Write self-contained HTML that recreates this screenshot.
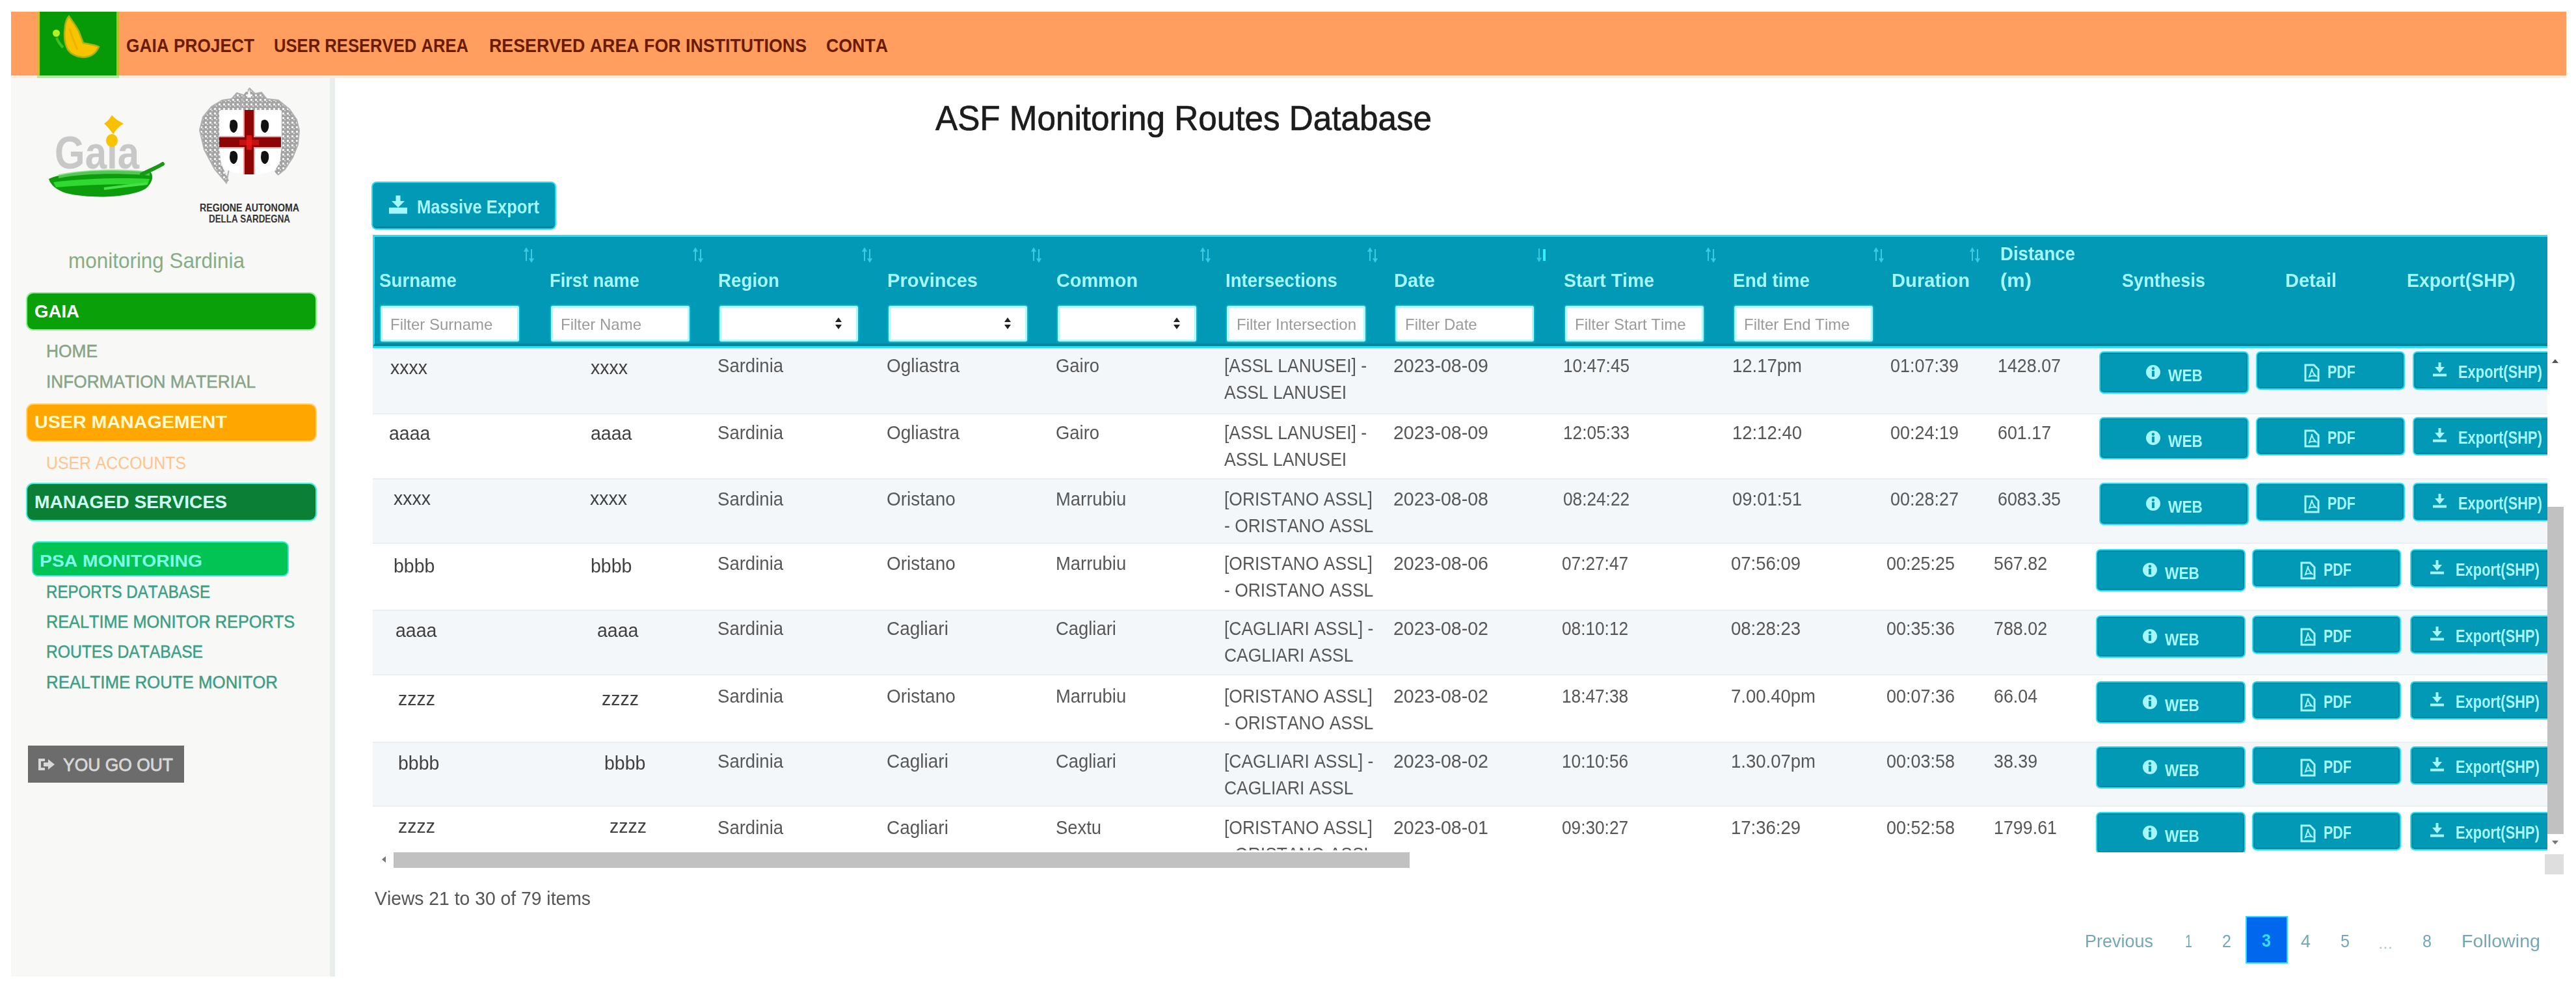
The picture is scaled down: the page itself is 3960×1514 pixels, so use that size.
<!DOCTYPE html>
<html><head><meta charset="utf-8">
<style>
html,body{margin:0;padding:0;}
body{width:3960px;height:1514px;overflow:hidden;background:#fff;position:relative;font-family:"Liberation Sans",sans-serif;font-kerning:none;}
.a{position:absolute;box-sizing:border-box;}
.t{position:absolute;white-space:nowrap;line-height:1;transform-origin:0 0;}
svg{position:absolute;overflow:visible;}
</style></head>
<body><div id="wrap" style="position:absolute;left:0;top:0;width:3960px;height:1514px;filter:blur(0.7px);">
<div class="a" style="left:17px;top:18px;width:3928px;height:98px;background:#ff9e5e;"></div>
<div class="a" style="left:57px;top:18px;width:126px;height:98px;background:#069a08;border-left:4px solid #c8c224;border-right:4px solid #b9bd22;"></div>
<svg style="left:57px;top:18px" width="126" height="98" viewBox="0 0 126 98">
<path d="M49 7 C53 13 60 22 64 30 C67 37 69 43 71 48 C80 50 90 51 95 54 C91 63 83 70 70 70 C59 69 51 64 47 58 C42 49 41 36 43 22 C44 15 46 10 49 7 Z" fill="#f8c400" stroke="#a8b414" stroke-width="2.5"/>
<path d="M50 26 C53 36 56 46 62 58" stroke="#ec9e00" stroke-width="3" fill="none" opacity="0.5"/>
<circle cx="29.5" cy="33" r="5.5" fill="#b6f020"/>
<path d="M30 40 C32 46 35 50 40 55" stroke="#40c020" stroke-width="4" fill="none"/>
</svg>
<div class="t " style="left:194.0px;top:55.2px;font-size:30px;color:#6a1c02;font-weight:bold;transform:scaleX(0.8754);">GAIA PROJECT</div>
<div class="t " style="left:421.0px;top:55.2px;font-size:30px;color:#6a1c02;font-weight:bold;transform:scaleX(0.8541);">USER RESERVED AREA</div>
<div class="t " style="left:752.0px;top:55.2px;font-size:30px;color:#6a1c02;font-weight:bold;transform:scaleX(0.8926);">RESERVED AREA FOR INSTITUTIONS</div>
<div class="t " style="left:1270.0px;top:55.2px;font-size:30px;color:#6a1c02;font-weight:bold;transform:scaleX(0.8907);">CONTA</div>
<div class="a" style="left:17px;top:116px;width:490px;height:1385px;background:#f8f8f6;"></div>
<div class="a" style="left:507px;top:116px;width:8px;height:1385px;background:#e9edec;"></div>
<div class="a" style="left:17px;top:116px;width:3928px;height:4px;background:#ffeadb;"></div>
<div class="a" style="left:57px;top:116px;width:126px;height:4px;background:#a8f0a0;"></div>
<svg style="left:60px;top:160px" width="210" height="160" viewBox="0 0 210 160">
<text x="24" y="99" font-family="Liberation Sans" font-weight="bold" font-size="70" fill="#c8c8c8" textLength="130" lengthAdjust="spacingAndGlyphs">Ga&#x131;a</text>
<path d="M112 17 C116 22 122 26 130 30 C123 34 118 40 114 46 C109 40 105 34 100 30 C106 26 109 22 112 17 Z" fill="#f7c000"/>
<ellipse cx="112" cy="56" rx="9" ry="10" fill="#f9c300"/>
<path d="M15 115 C40 103 110 99 172 105 C177 112 173 122 164 130 C140 144 80 146 42 137 C26 132 17 123 15 115 Z" fill="#0c9c0c"/>
<path d="M30 108 C70 100 130 98 170 104 L170 110 C130 106 70 106 30 114 Z" fill="#70dc70" opacity="0.7"/>
<path d="M22 120 C70 114 130 113 170 115 L167 124 C130 122 70 124 26 128 Z" fill="#30d830"/>
<path d="M100 130 C130 126 150 124 166 122" stroke="#48e048" stroke-width="4" fill="none"/>
<path d="M158 108 C170 102 180 98 190 92" stroke="#169a16" stroke-width="6" fill="none" stroke-linecap="round"/>
</svg>
<svg style="left:300px;top:130px" width="170" height="160" viewBox="0 0 170 160">
<defs><pattern id="lace" width="7" height="7" patternUnits="userSpaceOnUse"><rect width="7" height="7" fill="#a4a4a4"/><rect x="1" y="1" width="3" height="3" fill="#f2f2f2"/><rect x="4" y="4" width="2" height="2" fill="#d8d8d8"/></pattern></defs>
<path d="M83 5 L92 14 L102 12 L110 22 L128 24 L145 38 L156 54 L160 70 L158 92 L150 112 L138 130 L127 139 L122 134 L130 118 L133 96 L133 40 L37 40 L37 100 L40 122 L52 148 L48 151 L30 130 L14 100 L7 70 L12 50 L25 34 L42 24 L56 22 L64 13 L74 16 Z" fill="url(#lace)"/>
<path d="M83 5 L92 14 L102 12 L110 22 L128 24 L145 38 L156 54 L160 70 L158 92 L150 112 L138 130 L127 139 M48 151 L30 130 L14 100 L7 70 L12 50 L25 34 L42 24 L56 22 L64 13 L74 16 Z" fill="none" stroke="#b0b0b0" stroke-width="2"/>
<path d="M83 6 L86 20 L80 20 Z" fill="#ffffff"/>
<path d="M39 39 L131 39 L131 112 C131 128 118 138 85 138 C52 138 39 128 39 112 Z" fill="#ffffff"/>
<rect x="74" y="39" width="18" height="99" fill="#f4a0a0"/>
<rect x="37" y="79" width="95" height="19" fill="#f4a0a0"/>
<rect x="76" y="39" width="14" height="99" fill="#8c0606"/>
<rect x="37" y="81" width="95" height="15" fill="#8c0606"/>
<rect x="79" y="78" width="8" height="22" fill="#f01818" opacity="0.8"/>
<rect x="68" y="85" width="30" height="8" fill="#f01818" opacity="0.6"/>
<g fill="#111">
<path d="M54 56 C58 52 64 54 65 60 C66 66 64 72 60 74 C55 74 53 68 53 63 Z"/>
<path d="M102 56 C106 52 112 54 113 60 C114 66 112 72 108 74 C103 74 101 68 101 63 Z"/>
<path d="M54 104 C58 100 64 102 65 108 C66 114 64 120 60 122 C55 122 53 116 53 111 Z"/>
<path d="M102 104 C106 100 112 102 113 108 C114 114 112 120 108 122 C103 122 101 116 101 111 Z"/>
</g>
</svg>
<div class="t " style="left:307.0px;top:311.5px;font-size:16px;color:#303030;font-weight:bold;transform:scaleX(0.8872);transform-origin:0 0;">REGIONE AUTONOMA</div>
<div class="t " style="left:321.0px;top:328.3px;font-size:17px;color:#353535;font-weight:bold;transform:scaleX(0.7878);">DELLA SARDEGNA</div>
<div class="t " style="left:105.0px;top:382.6px;font-size:34px;color:#86ad86;transform:scaleX(0.9251);">monitoring Sardinia</div>
<div class="a" style="left:42px;top:451px;width:443px;height:55px;background:#0aa00a;border-radius:9px;box-shadow:0 0 0 2px #8cf08c;"></div>
<div class="t " style="left:53.0px;top:464.6px;font-size:28px;color:#ffffff;font-weight:bold;transform:scaleX(0.9857);">GAIA</div>
<div class="t " style="left:71.0px;top:525.6px;font-size:28px;color:#86a486;transform:scaleX(0.9405);-webkit-text-stroke:0.5px #86a486;">HOME</div>
<div class="t " style="left:71.0px;top:572.6px;font-size:28px;color:#86a486;transform:scaleX(0.9366);-webkit-text-stroke:0.5px #86a486;">INFORMATION MATERIAL</div>
<div class="a" style="left:42px;top:622px;width:443px;height:55px;background:#ffa600;border-radius:9px;box-shadow:0 0 0 2px #ffd27a;"></div>
<div class="t " style="left:53.0px;top:635.7px;font-size:27px;color:#fffad0;font-weight:bold;transform:scaleX(1.0609);">USER MANAGEMENT</div>
<div class="t " style="left:71.0px;top:698.7px;font-size:27px;color:#ffc48e;transform:scaleX(0.9187);">USER ACCOUNTS</div>
<div class="a" style="left:42px;top:744px;width:443px;height:55px;background:#0b7f36;border-radius:9px;box-shadow:0 0 0 2px #40f0e0;"></div>
<div class="t " style="left:53.0px;top:757.6px;font-size:28px;color:#d0fff4;font-weight:bold;transform:scaleX(1.0067);">MANAGED SERVICES</div>
<div class="a" style="left:51px;top:834px;width:391px;height:50px;background:#02c455;border-radius:7px;box-shadow:0 0 0 2px #30f0d0;"></div>
<div class="t " style="left:61.0px;top:850.0px;font-size:25px;color:#80fae8;font-weight:bold;transform:scaleX(1.1321);">PSA MONITORING</div>
<div class="t " style="left:71.0px;top:896.7px;font-size:27px;color:#3a9f86;transform:scaleX(0.8934);-webkit-text-stroke:0.5px #3a9f86;">REPORTS DATABASE</div>
<div class="t " style="left:71.0px;top:942.7px;font-size:27px;color:#3a9f86;transform:scaleX(0.9362);-webkit-text-stroke:0.5px #3a9f86;">REALTIME MONITOR REPORTS</div>
<div class="t " style="left:71.0px;top:988.7px;font-size:27px;color:#3a9f86;transform:scaleX(0.9127);-webkit-text-stroke:0.5px #3a9f86;">ROUTES DATABASE</div>
<div class="t " style="left:71.0px;top:1035.7px;font-size:27px;color:#3a9f86;transform:scaleX(0.9570);-webkit-text-stroke:0.5px #3a9f86;">REALTIME ROUTE MONITOR</div>
<div class="a" style="left:43px;top:1146px;width:240px;height:57px;background:#6c6c6c;"></div>
<svg style="left:57px;top:1163px" width="30" height="24" viewBox="0 0 30 24">
<path d="M2 3 L12 3 L12 7 L6 7 L6 17 L12 17 L12 21 L2 21 Z" fill="#d8d8d8"/>
<path d="M10 9 L17 9 L17 4 L27 12 L17 20 L17 15 L10 15 Z" fill="#d8d8d8"/>
</svg>
<div class="t " style="left:97.0px;top:1162.7px;font-size:27px;color:#d8d8d8;transform:scaleX(0.9797);-webkit-text-stroke:0.8px #d8d8d8;">YOU GO OUT</div>
<div class="t " style="left:1438.0px;top:154.6px;font-size:53px;color:#1c1c1c;transform:scaleX(0.9664);-webkit-text-stroke:0.7px #1c1c1c;">ASF Monitoring Routes Database</div>
<div class="a" style="left:573px;top:281px;width:280px;height:70px;background:#0299b6;border-radius:6px;box-shadow:0 0 0 2px #22e2f4;border-bottom:3px solid #0a839c;"></div>
<svg style="left:597px;top:300px" width="30" height="30" viewBox="0 0 30 30"><path d="M11.5 0.5 L18.5 0.5 L18.5 9 L25 9 L15 19 L5 9 L11.5 9 Z" fill="#a6f6ff"/><rect x="1" y="19" width="28" height="9.5" fill="#a6f6ff"/></svg>
<div class="t " style="left:641.0px;top:303.2px;font-size:30px;color:#a6f6ff;font-weight:bold;transform:scaleX(0.8542);">Massive Export</div>
<div class="a" style="left:573px;top:361px;width:3343px;height:172px;background:#0299b6;border-top:3px solid #22e2f4;border-left:3px solid #22e2f4;border-bottom:5px solid #08849c;"></div>
<div class="a" style="left:573px;top:532px;width:3343px;height:3px;background:#22e2f4;"></div>
<div class="t " style="left:583.0px;top:416.2px;font-size:30px;color:#a6f6ff;font-weight:bold;transform:scaleX(0.9269);">Surname</div>
<div class="t " style="left:845.0px;top:416.2px;font-size:30px;color:#a6f6ff;font-weight:bold;transform:scaleX(0.9096);">First name</div>
<div class="t " style="left:1104.0px;top:416.2px;font-size:30px;color:#a6f6ff;font-weight:bold;transform:scaleX(0.9246);">Region</div>
<div class="t " style="left:1364.0px;top:416.2px;font-size:30px;color:#a6f6ff;font-weight:bold;transform:scaleX(0.9693);">Provinces</div>
<div class="t " style="left:1624.0px;top:416.2px;font-size:30px;color:#a6f6ff;font-weight:bold;transform:scaleX(0.9616);">Common</div>
<div class="t " style="left:1884.0px;top:416.2px;font-size:30px;color:#a6f6ff;font-weight:bold;transform:scaleX(0.9211);">Intersections</div>
<div class="t " style="left:2143.0px;top:416.2px;font-size:30px;color:#a6f6ff;font-weight:bold;transform:scaleX(0.9689);">Date</div>
<div class="t " style="left:2404.0px;top:416.2px;font-size:30px;color:#a6f6ff;font-weight:bold;transform:scaleX(0.9475);">Start Time</div>
<div class="t " style="left:2664.0px;top:416.2px;font-size:30px;color:#a6f6ff;font-weight:bold;transform:scaleX(0.9315);">End time</div>
<div class="t " style="left:2908.0px;top:416.2px;font-size:30px;color:#a6f6ff;font-weight:bold;transform:scaleX(0.9730);">Duration</div>
<div class="t " style="left:3075.0px;top:375.2px;font-size:30px;color:#a6f6ff;font-weight:bold;transform:scaleX(0.9196);">Distance</div>
<div class="t " style="left:3075.0px;top:416.2px;font-size:30px;color:#a6f6ff;font-weight:bold;transform:scaleX(1.0288);">(m)</div>
<div class="t " style="left:3262.0px;top:416.2px;font-size:30px;color:#a6f6ff;font-weight:bold;transform:scaleX(0.9032);">Synthesis</div>
<div class="t " style="left:3513.0px;top:416.2px;font-size:30px;color:#a6f6ff;font-weight:bold;transform:scaleX(0.9670);">Detail</div>
<div class="t " style="left:3700.0px;top:416.2px;font-size:30px;color:#a6f6ff;font-weight:bold;transform:scaleX(0.9452);">Export(SHP)</div>
<svg style="left:804px;top:380px" width="20" height="24" viewBox="0 0 20 24"><path d="M5 21 L5 3 M2 7 L5 2 L8 7 M13 3 L13 21 M10 17 L13 22 L16 17" stroke="#3ccbe0" stroke-width="2" fill="none"/></svg>
<svg style="left:1064px;top:380px" width="20" height="24" viewBox="0 0 20 24"><path d="M5 21 L5 3 M2 7 L5 2 L8 7 M13 3 L13 21 M10 17 L13 22 L16 17" stroke="#3ccbe0" stroke-width="2" fill="none"/></svg>
<svg style="left:1324px;top:380px" width="20" height="24" viewBox="0 0 20 24"><path d="M5 21 L5 3 M2 7 L5 2 L8 7 M13 3 L13 21 M10 17 L13 22 L16 17" stroke="#3ccbe0" stroke-width="2" fill="none"/></svg>
<svg style="left:1584px;top:380px" width="20" height="24" viewBox="0 0 20 24"><path d="M5 21 L5 3 M2 7 L5 2 L8 7 M13 3 L13 21 M10 17 L13 22 L16 17" stroke="#3ccbe0" stroke-width="2" fill="none"/></svg>
<svg style="left:1844px;top:380px" width="20" height="24" viewBox="0 0 20 24"><path d="M5 21 L5 3 M2 7 L5 2 L8 7 M13 3 L13 21 M10 17 L13 22 L16 17" stroke="#3ccbe0" stroke-width="2" fill="none"/></svg>
<svg style="left:2101px;top:380px" width="20" height="24" viewBox="0 0 20 24"><path d="M5 21 L5 3 M2 7 L5 2 L8 7 M13 3 L13 21 M10 17 L13 22 L16 17" stroke="#3ccbe0" stroke-width="2" fill="none"/></svg>
<svg style="left:2361px;top:380px" width="20" height="24" viewBox="0 0 20 24"><path d="M5 2 L5 20 M2 16 L5 21 L8 16" stroke="#3ac8dc" stroke-width="2" fill="none"/><path d="M13 3 L13 21" stroke="#30f0ff" stroke-width="4" fill="none"/></svg>
<svg style="left:2621px;top:380px" width="20" height="24" viewBox="0 0 20 24"><path d="M5 21 L5 3 M2 7 L5 2 L8 7 M13 3 L13 21 M10 17 L13 22 L16 17" stroke="#3ccbe0" stroke-width="2" fill="none"/></svg>
<svg style="left:2879px;top:380px" width="20" height="24" viewBox="0 0 20 24"><path d="M5 21 L5 3 M2 7 L5 2 L8 7 M13 3 L13 21 M10 17 L13 22 L16 17" stroke="#3ccbe0" stroke-width="2" fill="none"/></svg>
<svg style="left:3027px;top:380px" width="20" height="24" viewBox="0 0 20 24"><path d="M5 21 L5 3 M2 7 L5 2 L8 7 M13 3 L13 21 M10 17 L13 22 L16 17" stroke="#3ccbe0" stroke-width="2" fill="none"/></svg>
<div class="a" style="left:585px;top:470px;width:213px;height:55px;background:#fff;border:3px solid #a8fbff;box-shadow:0 0 0 2px #06b0c8;border-radius:3px;"></div>
<div class="a" style="left:588px;top:473px;width:207px;height:49px;overflow:hidden;">
<div class="t " style="left:12.0px;top:14.2px;font-size:24px;color:#9a9a9a;transform:scaleX(1.0000);">Filter Surname</div>
</div>
<div class="a" style="left:847px;top:470px;width:213px;height:55px;background:#fff;border:3px solid #a8fbff;box-shadow:0 0 0 2px #06b0c8;border-radius:3px;"></div>
<div class="a" style="left:850px;top:473px;width:207px;height:49px;overflow:hidden;">
<div class="t " style="left:12.0px;top:14.2px;font-size:24px;color:#9a9a9a;transform:scaleX(1.0000);">Filter Name</div>
</div>
<div class="a" style="left:1106px;top:470px;width:213px;height:55px;background:#fff;border:3px solid #a8fbff;box-shadow:0 0 0 2px #06b0c8;border-radius:3px;"></div>
<svg style="left:1282px;top:486px" width="14" height="22" viewBox="0 0 14 22"><path d="M7 2 L12 9 L2 9 Z M7 20 L12 13 L2 13 Z" fill="#222"/></svg>
<div class="a" style="left:1366px;top:470px;width:213px;height:55px;background:#fff;border:3px solid #a8fbff;box-shadow:0 0 0 2px #06b0c8;border-radius:3px;"></div>
<svg style="left:1542px;top:486px" width="14" height="22" viewBox="0 0 14 22"><path d="M7 2 L12 9 L2 9 Z M7 20 L12 13 L2 13 Z" fill="#222"/></svg>
<div class="a" style="left:1626px;top:470px;width:213px;height:55px;background:#fff;border:3px solid #a8fbff;box-shadow:0 0 0 2px #06b0c8;border-radius:3px;"></div>
<svg style="left:1802px;top:486px" width="14" height="22" viewBox="0 0 14 22"><path d="M7 2 L12 9 L2 9 Z M7 20 L12 13 L2 13 Z" fill="#222"/></svg>
<div class="a" style="left:1886px;top:470px;width:213px;height:55px;background:#fff;border:3px solid #a8fbff;box-shadow:0 0 0 2px #06b0c8;border-radius:3px;"></div>
<div class="a" style="left:1889px;top:473px;width:207px;height:49px;overflow:hidden;">
<div class="t " style="left:12.0px;top:14.2px;font-size:24px;color:#9a9a9a;transform:scaleX(1.0000);">Filter Intersection</div>
</div>
<div class="a" style="left:2145px;top:470px;width:213px;height:55px;background:#fff;border:3px solid #a8fbff;box-shadow:0 0 0 2px #06b0c8;border-radius:3px;"></div>
<div class="a" style="left:2148px;top:473px;width:207px;height:49px;overflow:hidden;">
<div class="t " style="left:12.0px;top:14.2px;font-size:24px;color:#9a9a9a;transform:scaleX(1.0000);">Filter Date</div>
</div>
<div class="a" style="left:2406px;top:470px;width:213px;height:55px;background:#fff;border:3px solid #a8fbff;box-shadow:0 0 0 2px #06b0c8;border-radius:3px;"></div>
<div class="a" style="left:2409px;top:473px;width:207px;height:49px;overflow:hidden;">
<div class="t " style="left:12.0px;top:14.2px;font-size:24px;color:#9a9a9a;transform:scaleX(1.0000);">Filter Start Time</div>
</div>
<div class="a" style="left:2666px;top:470px;width:213px;height:55px;background:#fff;border:3px solid #a8fbff;box-shadow:0 0 0 2px #06b0c8;border-radius:3px;"></div>
<div class="a" style="left:2669px;top:473px;width:207px;height:49px;overflow:hidden;">
<div class="t " style="left:12.0px;top:14.2px;font-size:24px;color:#9a9a9a;transform:scaleX(1.0000);">Filter End Time</div>
</div>
<div class="a" style="left:573px;top:535px;width:3343px;height:775px;overflow:hidden;">
<div class="a" style="left:0px;top:0px;width:3343px;height:101px;background:#f3f7fa;"></div>
<div class="t" style="left:27.0px;top:14.6px;font-size:30px;color:#404040;transform:scaleX(0.9500);">xxxx</div>
<div class="t" style="left:335.0px;top:14.6px;font-size:30px;color:#404040;transform:scaleX(0.9500);">xxxx</div>
<div class="t" style="left:530.0px;top:13.4px;font-size:29px;color:#575757;transform:scaleX(0.9500);">Sardinia</div>
<div class="t" style="left:790.0px;top:13.4px;font-size:29px;color:#575757;transform:scaleX(0.9650);">Ogliastra</div>
<div class="t" style="left:1050.0px;top:13.4px;font-size:29px;color:#575757;transform:scaleX(0.9450);">Gairo</div>
<div class="t" style="left:1309.0px;top:13.4px;font-size:29px;color:#575757;transform:scaleX(0.9120);">[ASSL LANUSEI] -</div>
<div class="t" style="left:1309.0px;top:54.4px;font-size:29px;color:#575757;transform:scaleX(0.9120);">ASSL LANUSEI</div>
<div class="t" style="left:1569.0px;top:13.4px;font-size:29px;color:#575757;transform:scaleX(0.9840);">2023-08-09</div>
<div class="t" style="left:1830.0px;top:13.4px;font-size:29px;color:#575757;transform:scaleX(0.9040);">10:47:45</div>
<div class="t" style="left:2090.0px;top:13.4px;font-size:29px;color:#575757;transform:scaleX(0.9480);">12.17pm</div>
<div class="t" style="left:2333.0px;top:13.4px;font-size:29px;color:#575757;transform:scaleX(0.9300);">01:07:39</div>
<div class="t" style="left:2498.0px;top:13.4px;font-size:29px;color:#575757;transform:scaleX(0.9250);">1428.07</div>
<div class="a" style="left:2656px;top:7px;width:226px;height:61px;background:#0299b6;border-radius:5px;border:2px solid #0a88a2;box-shadow:0 0 0 2px #22e2f4;"></div>
<div class="a" style="left:2897px;top:7px;width:225px;height:55px;background:#0299b6;border-radius:5px;border:2px solid #0a88a2;box-shadow:0 0 0 2px #22e2f4;"></div>
<div class="a" style="left:3138px;top:7px;width:225px;height:55px;background:#0299b6;border-radius:5px;border:2px solid #0a88a2;box-shadow:0 0 0 2px #22e2f4;"></div>
<svg style="left:2725px;top:25px" width="24" height="24" viewBox="0 0 24 24"><circle cx="12" cy="12" r="11" fill="#a6f6ff"/><rect x="10" y="10" width="4" height="9" fill="#0299b6"/><circle cx="12" cy="6.5" r="2.2" fill="#0299b6"/></svg>
<div class="t" style="left:2760.0px;top:28.5px;font-size:26px;color:#a6f6ff;font-weight:bold;transform:scaleX(0.8737);">WEB</div>
<svg style="left:2968px;top:24px" width="26" height="28" viewBox="0 0 26 28"><path d="M3 2 L16 2 L23 9 L23 26 L3 26 Z" fill="none" stroke="#a6f6ff" stroke-width="3"/><path d="M9 20 C11 14 13 10 13 7 C13 11 16 16 19 19 C15 18 11 19 9 20 Z" fill="none" stroke="#a6f6ff" stroke-width="2"/></svg>
<div class="t" style="left:3005.0px;top:22.8px;font-size:28px;color:#a6f6ff;font-weight:bold;transform:scaleX(0.7679);">PDF</div>
<svg style="left:3167px;top:22px" width="22" height="22" viewBox="0 0 22 22"><path d="M8.5 0 L12.5 0 L12.5 7 L18 7 L10.5 16 L3 7 L8.5 7 Z" fill="#a6f6ff"/><rect x="0" y="17.5" width="21" height="4" fill="#a6f6ff"/></svg>
<div class="t" style="left:3206.0px;top:23.3px;font-size:28px;color:#a6f6ff;font-weight:bold;transform:scaleX(0.7823);">Export(SHP)</div>
<div class="a" style="left:0px;top:100px;width:3343px;height:2px;background:#eceff2;"></div>
<div class="t" style="left:25.0px;top:115.6px;font-size:30px;color:#404040;transform:scaleX(0.9500);">aaaa</div>
<div class="t" style="left:335.0px;top:115.6px;font-size:30px;color:#404040;transform:scaleX(0.9500);">aaaa</div>
<div class="t" style="left:530.0px;top:116.4px;font-size:29px;color:#575757;transform:scaleX(0.9500);">Sardinia</div>
<div class="t" style="left:790.0px;top:116.4px;font-size:29px;color:#575757;transform:scaleX(0.9650);">Ogliastra</div>
<div class="t" style="left:1050.0px;top:116.4px;font-size:29px;color:#575757;transform:scaleX(0.9450);">Gairo</div>
<div class="t" style="left:1309.0px;top:116.4px;font-size:29px;color:#575757;transform:scaleX(0.9120);">[ASSL LANUSEI] -</div>
<div class="t" style="left:1309.0px;top:157.4px;font-size:29px;color:#575757;transform:scaleX(0.9120);">ASSL LANUSEI</div>
<div class="t" style="left:1569.0px;top:116.4px;font-size:29px;color:#575757;transform:scaleX(0.9840);">2023-08-09</div>
<div class="t" style="left:1830.0px;top:116.4px;font-size:29px;color:#575757;transform:scaleX(0.9040);">12:05:33</div>
<div class="t" style="left:2090.0px;top:116.4px;font-size:29px;color:#575757;transform:scaleX(0.9480);">12:12:40</div>
<div class="t" style="left:2333.0px;top:116.4px;font-size:29px;color:#575757;transform:scaleX(0.9300);">00:24:19</div>
<div class="t" style="left:2498.0px;top:116.4px;font-size:29px;color:#575757;transform:scaleX(0.9250);">601.17</div>
<div class="a" style="left:2656px;top:108px;width:226px;height:61px;background:#0299b6;border-radius:5px;border:2px solid #0a88a2;box-shadow:0 0 0 2px #22e2f4;"></div>
<div class="a" style="left:2897px;top:108px;width:225px;height:55px;background:#0299b6;border-radius:5px;border:2px solid #0a88a2;box-shadow:0 0 0 2px #22e2f4;"></div>
<div class="a" style="left:3138px;top:108px;width:225px;height:55px;background:#0299b6;border-radius:5px;border:2px solid #0a88a2;box-shadow:0 0 0 2px #22e2f4;"></div>
<svg style="left:2725px;top:126px" width="24" height="24" viewBox="0 0 24 24"><circle cx="12" cy="12" r="11" fill="#a6f6ff"/><rect x="10" y="10" width="4" height="9" fill="#0299b6"/><circle cx="12" cy="6.5" r="2.2" fill="#0299b6"/></svg>
<div class="t" style="left:2760.0px;top:129.5px;font-size:26px;color:#a6f6ff;font-weight:bold;transform:scaleX(0.8737);">WEB</div>
<svg style="left:2968px;top:125px" width="26" height="28" viewBox="0 0 26 28"><path d="M3 2 L16 2 L23 9 L23 26 L3 26 Z" fill="none" stroke="#a6f6ff" stroke-width="3"/><path d="M9 20 C11 14 13 10 13 7 C13 11 16 16 19 19 C15 18 11 19 9 20 Z" fill="none" stroke="#a6f6ff" stroke-width="2"/></svg>
<div class="t" style="left:3005.0px;top:123.8px;font-size:28px;color:#a6f6ff;font-weight:bold;transform:scaleX(0.7679);">PDF</div>
<svg style="left:3167px;top:123px" width="22" height="22" viewBox="0 0 22 22"><path d="M8.5 0 L12.5 0 L12.5 7 L18 7 L10.5 16 L3 7 L8.5 7 Z" fill="#a6f6ff"/><rect x="0" y="17.5" width="21" height="4" fill="#a6f6ff"/></svg>
<div class="t" style="left:3206.0px;top:124.3px;font-size:28px;color:#a6f6ff;font-weight:bold;transform:scaleX(0.7823);">Export(SHP)</div>
<div class="a" style="left:0px;top:201px;width:3343px;height:99px;background:#f3f7fa;"></div>
<div class="a" style="left:0px;top:200px;width:3343px;height:2px;background:#eceff2;"></div>
<div class="t" style="left:32.0px;top:215.6px;font-size:30px;color:#404040;transform:scaleX(0.9500);">xxxx</div>
<div class="t" style="left:334.0px;top:215.6px;font-size:30px;color:#404040;transform:scaleX(0.9500);">xxxx</div>
<div class="t" style="left:530.0px;top:218.4px;font-size:29px;color:#575757;transform:scaleX(0.9500);">Sardinia</div>
<div class="t" style="left:790.0px;top:218.4px;font-size:29px;color:#575757;transform:scaleX(0.9650);">Oristano</div>
<div class="t" style="left:1050.0px;top:218.4px;font-size:29px;color:#575757;transform:scaleX(0.9450);">Marrubiu</div>
<div class="t" style="left:1309.0px;top:218.4px;font-size:29px;color:#575757;transform:scaleX(0.9120);">[ORISTANO ASSL]</div>
<div class="t" style="left:1309.0px;top:259.4px;font-size:29px;color:#575757;transform:scaleX(0.9120);">- ORISTANO ASSL</div>
<div class="t" style="left:1569.0px;top:218.4px;font-size:29px;color:#575757;transform:scaleX(0.9840);">2023-08-08</div>
<div class="t" style="left:1830.0px;top:218.4px;font-size:29px;color:#575757;transform:scaleX(0.9040);">08:24:22</div>
<div class="t" style="left:2090.0px;top:218.4px;font-size:29px;color:#575757;transform:scaleX(0.9480);">09:01:51</div>
<div class="t" style="left:2333.0px;top:218.4px;font-size:29px;color:#575757;transform:scaleX(0.9300);">00:28:27</div>
<div class="t" style="left:2498.0px;top:218.4px;font-size:29px;color:#575757;transform:scaleX(0.9250);">6083.35</div>
<div class="a" style="left:2656px;top:209px;width:226px;height:61px;background:#0299b6;border-radius:5px;border:2px solid #0a88a2;box-shadow:0 0 0 2px #22e2f4;"></div>
<div class="a" style="left:2897px;top:209px;width:225px;height:55px;background:#0299b6;border-radius:5px;border:2px solid #0a88a2;box-shadow:0 0 0 2px #22e2f4;"></div>
<div class="a" style="left:3138px;top:209px;width:225px;height:55px;background:#0299b6;border-radius:5px;border:2px solid #0a88a2;box-shadow:0 0 0 2px #22e2f4;"></div>
<svg style="left:2725px;top:227px" width="24" height="24" viewBox="0 0 24 24"><circle cx="12" cy="12" r="11" fill="#a6f6ff"/><rect x="10" y="10" width="4" height="9" fill="#0299b6"/><circle cx="12" cy="6.5" r="2.2" fill="#0299b6"/></svg>
<div class="t" style="left:2760.0px;top:230.5px;font-size:26px;color:#a6f6ff;font-weight:bold;transform:scaleX(0.8737);">WEB</div>
<svg style="left:2968px;top:226px" width="26" height="28" viewBox="0 0 26 28"><path d="M3 2 L16 2 L23 9 L23 26 L3 26 Z" fill="none" stroke="#a6f6ff" stroke-width="3"/><path d="M9 20 C11 14 13 10 13 7 C13 11 16 16 19 19 C15 18 11 19 9 20 Z" fill="none" stroke="#a6f6ff" stroke-width="2"/></svg>
<div class="t" style="left:3005.0px;top:224.8px;font-size:28px;color:#a6f6ff;font-weight:bold;transform:scaleX(0.7679);">PDF</div>
<svg style="left:3167px;top:224px" width="22" height="22" viewBox="0 0 22 22"><path d="M8.5 0 L12.5 0 L12.5 7 L18 7 L10.5 16 L3 7 L8.5 7 Z" fill="#a6f6ff"/><rect x="0" y="17.5" width="21" height="4" fill="#a6f6ff"/></svg>
<div class="t" style="left:3206.0px;top:225.3px;font-size:28px;color:#a6f6ff;font-weight:bold;transform:scaleX(0.7823);">Export(SHP)</div>
<div class="a" style="left:0px;top:299px;width:3343px;height:2px;background:#eceff2;"></div>
<div class="t" style="left:32.0px;top:319.6px;font-size:30px;color:#404040;transform:scaleX(0.9500);">bbbb</div>
<div class="t" style="left:335.0px;top:319.6px;font-size:30px;color:#404040;transform:scaleX(0.9500);">bbbb</div>
<div class="t" style="left:530.0px;top:317.4px;font-size:29px;color:#575757;transform:scaleX(0.9500);">Sardinia</div>
<div class="t" style="left:790.0px;top:317.4px;font-size:29px;color:#575757;transform:scaleX(0.9650);">Oristano</div>
<div class="t" style="left:1050.0px;top:317.4px;font-size:29px;color:#575757;transform:scaleX(0.9450);">Marrubiu</div>
<div class="t" style="left:1309.0px;top:317.4px;font-size:29px;color:#575757;transform:scaleX(0.9120);">[ORISTANO ASSL]</div>
<div class="t" style="left:1309.0px;top:358.4px;font-size:29px;color:#575757;transform:scaleX(0.9120);">- ORISTANO ASSL</div>
<div class="t" style="left:1569.0px;top:317.4px;font-size:29px;color:#575757;transform:scaleX(0.9840);">2023-08-06</div>
<div class="t" style="left:1828.0px;top:317.4px;font-size:29px;color:#575757;transform:scaleX(0.9040);">07:27:47</div>
<div class="t" style="left:2088.0px;top:317.4px;font-size:29px;color:#575757;transform:scaleX(0.9480);">07:56:09</div>
<div class="t" style="left:2327.0px;top:317.4px;font-size:29px;color:#575757;transform:scaleX(0.9300);">00:25:25</div>
<div class="t" style="left:2492.0px;top:317.4px;font-size:29px;color:#575757;transform:scaleX(0.9250);">567.82</div>
<div class="a" style="left:2651px;top:311px;width:226px;height:61px;background:#0299b6;border-radius:5px;border:2px solid #0a88a2;box-shadow:0 0 0 2px #22e2f4;"></div>
<div class="a" style="left:2891px;top:311px;width:225px;height:55px;background:#0299b6;border-radius:5px;border:2px solid #0a88a2;box-shadow:0 0 0 2px #22e2f4;"></div>
<div class="a" style="left:3134px;top:311px;width:225px;height:55px;background:#0299b6;border-radius:5px;border:2px solid #0a88a2;box-shadow:0 0 0 2px #22e2f4;"></div>
<svg style="left:2720px;top:329px" width="24" height="24" viewBox="0 0 24 24"><circle cx="12" cy="12" r="11" fill="#a6f6ff"/><rect x="10" y="10" width="4" height="9" fill="#0299b6"/><circle cx="12" cy="6.5" r="2.2" fill="#0299b6"/></svg>
<div class="t" style="left:2755.0px;top:332.5px;font-size:26px;color:#a6f6ff;font-weight:bold;transform:scaleX(0.8737);">WEB</div>
<svg style="left:2962px;top:328px" width="26" height="28" viewBox="0 0 26 28"><path d="M3 2 L16 2 L23 9 L23 26 L3 26 Z" fill="none" stroke="#a6f6ff" stroke-width="3"/><path d="M9 20 C11 14 13 10 13 7 C13 11 16 16 19 19 C15 18 11 19 9 20 Z" fill="none" stroke="#a6f6ff" stroke-width="2"/></svg>
<div class="t" style="left:2999.0px;top:326.8px;font-size:28px;color:#a6f6ff;font-weight:bold;transform:scaleX(0.7679);">PDF</div>
<svg style="left:3163px;top:326px" width="22" height="22" viewBox="0 0 22 22"><path d="M8.5 0 L12.5 0 L12.5 7 L18 7 L10.5 16 L3 7 L8.5 7 Z" fill="#a6f6ff"/><rect x="0" y="17.5" width="21" height="4" fill="#a6f6ff"/></svg>
<div class="t" style="left:3202.0px;top:327.3px;font-size:28px;color:#a6f6ff;font-weight:bold;transform:scaleX(0.7823);">Export(SHP)</div>
<div class="a" style="left:0px;top:403px;width:3343px;height:99px;background:#f3f7fa;"></div>
<div class="a" style="left:0px;top:402px;width:3343px;height:2px;background:#eceff2;"></div>
<div class="t" style="left:35.0px;top:418.6px;font-size:30px;color:#404040;transform:scaleX(0.9500);">aaaa</div>
<div class="t" style="left:345.0px;top:418.6px;font-size:30px;color:#404040;transform:scaleX(0.9500);">aaaa</div>
<div class="t" style="left:530.0px;top:417.4px;font-size:29px;color:#575757;transform:scaleX(0.9500);">Sardinia</div>
<div class="t" style="left:790.0px;top:417.4px;font-size:29px;color:#575757;transform:scaleX(0.9650);">Cagliari</div>
<div class="t" style="left:1050.0px;top:417.4px;font-size:29px;color:#575757;transform:scaleX(0.9450);">Cagliari</div>
<div class="t" style="left:1309.0px;top:417.4px;font-size:29px;color:#575757;transform:scaleX(0.9120);">[CAGLIARI ASSL] -</div>
<div class="t" style="left:1309.0px;top:458.4px;font-size:29px;color:#575757;transform:scaleX(0.9120);">CAGLIARI ASSL</div>
<div class="t" style="left:1569.0px;top:417.4px;font-size:29px;color:#575757;transform:scaleX(0.9840);">2023-08-02</div>
<div class="t" style="left:1828.0px;top:417.4px;font-size:29px;color:#575757;transform:scaleX(0.9040);">08:10:12</div>
<div class="t" style="left:2088.0px;top:417.4px;font-size:29px;color:#575757;transform:scaleX(0.9480);">08:28:23</div>
<div class="t" style="left:2327.0px;top:417.4px;font-size:29px;color:#575757;transform:scaleX(0.9300);">00:35:36</div>
<div class="t" style="left:2492.0px;top:417.4px;font-size:29px;color:#575757;transform:scaleX(0.9250);">788.02</div>
<div class="a" style="left:2651px;top:413px;width:226px;height:61px;background:#0299b6;border-radius:5px;border:2px solid #0a88a2;box-shadow:0 0 0 2px #22e2f4;"></div>
<div class="a" style="left:2891px;top:413px;width:225px;height:55px;background:#0299b6;border-radius:5px;border:2px solid #0a88a2;box-shadow:0 0 0 2px #22e2f4;"></div>
<div class="a" style="left:3134px;top:413px;width:225px;height:55px;background:#0299b6;border-radius:5px;border:2px solid #0a88a2;box-shadow:0 0 0 2px #22e2f4;"></div>
<svg style="left:2720px;top:431px" width="24" height="24" viewBox="0 0 24 24"><circle cx="12" cy="12" r="11" fill="#a6f6ff"/><rect x="10" y="10" width="4" height="9" fill="#0299b6"/><circle cx="12" cy="6.5" r="2.2" fill="#0299b6"/></svg>
<div class="t" style="left:2755.0px;top:434.5px;font-size:26px;color:#a6f6ff;font-weight:bold;transform:scaleX(0.8737);">WEB</div>
<svg style="left:2962px;top:430px" width="26" height="28" viewBox="0 0 26 28"><path d="M3 2 L16 2 L23 9 L23 26 L3 26 Z" fill="none" stroke="#a6f6ff" stroke-width="3"/><path d="M9 20 C11 14 13 10 13 7 C13 11 16 16 19 19 C15 18 11 19 9 20 Z" fill="none" stroke="#a6f6ff" stroke-width="2"/></svg>
<div class="t" style="left:2999.0px;top:428.8px;font-size:28px;color:#a6f6ff;font-weight:bold;transform:scaleX(0.7679);">PDF</div>
<svg style="left:3163px;top:428px" width="22" height="22" viewBox="0 0 22 22"><path d="M8.5 0 L12.5 0 L12.5 7 L18 7 L10.5 16 L3 7 L8.5 7 Z" fill="#a6f6ff"/><rect x="0" y="17.5" width="21" height="4" fill="#a6f6ff"/></svg>
<div class="t" style="left:3202.0px;top:429.3px;font-size:28px;color:#a6f6ff;font-weight:bold;transform:scaleX(0.7823);">Export(SHP)</div>
<div class="a" style="left:0px;top:501px;width:3343px;height:2px;background:#eceff2;"></div>
<div class="t" style="left:39.0px;top:523.6px;font-size:30px;color:#404040;transform:scaleX(0.9500);">zzzz</div>
<div class="t" style="left:352.0px;top:523.6px;font-size:30px;color:#404040;transform:scaleX(0.9500);">zzzz</div>
<div class="t" style="left:530.0px;top:521.4px;font-size:29px;color:#575757;transform:scaleX(0.9500);">Sardinia</div>
<div class="t" style="left:790.0px;top:521.4px;font-size:29px;color:#575757;transform:scaleX(0.9650);">Oristano</div>
<div class="t" style="left:1050.0px;top:521.4px;font-size:29px;color:#575757;transform:scaleX(0.9450);">Marrubiu</div>
<div class="t" style="left:1309.0px;top:521.4px;font-size:29px;color:#575757;transform:scaleX(0.9120);">[ORISTANO ASSL]</div>
<div class="t" style="left:1309.0px;top:562.4px;font-size:29px;color:#575757;transform:scaleX(0.9120);">- ORISTANO ASSL</div>
<div class="t" style="left:1569.0px;top:521.4px;font-size:29px;color:#575757;transform:scaleX(0.9840);">2023-08-02</div>
<div class="t" style="left:1828.0px;top:521.4px;font-size:29px;color:#575757;transform:scaleX(0.9040);">18:47:38</div>
<div class="t" style="left:2088.0px;top:521.4px;font-size:29px;color:#575757;transform:scaleX(0.9480);">7.00.40pm</div>
<div class="t" style="left:2327.0px;top:521.4px;font-size:29px;color:#575757;transform:scaleX(0.9300);">00:07:36</div>
<div class="t" style="left:2492.0px;top:521.4px;font-size:29px;color:#575757;transform:scaleX(0.9250);">66.04</div>
<div class="a" style="left:2651px;top:514px;width:226px;height:61px;background:#0299b6;border-radius:5px;border:2px solid #0a88a2;box-shadow:0 0 0 2px #22e2f4;"></div>
<div class="a" style="left:2891px;top:514px;width:225px;height:55px;background:#0299b6;border-radius:5px;border:2px solid #0a88a2;box-shadow:0 0 0 2px #22e2f4;"></div>
<div class="a" style="left:3134px;top:514px;width:225px;height:55px;background:#0299b6;border-radius:5px;border:2px solid #0a88a2;box-shadow:0 0 0 2px #22e2f4;"></div>
<svg style="left:2720px;top:532px" width="24" height="24" viewBox="0 0 24 24"><circle cx="12" cy="12" r="11" fill="#a6f6ff"/><rect x="10" y="10" width="4" height="9" fill="#0299b6"/><circle cx="12" cy="6.5" r="2.2" fill="#0299b6"/></svg>
<div class="t" style="left:2755.0px;top:535.5px;font-size:26px;color:#a6f6ff;font-weight:bold;transform:scaleX(0.8737);">WEB</div>
<svg style="left:2962px;top:531px" width="26" height="28" viewBox="0 0 26 28"><path d="M3 2 L16 2 L23 9 L23 26 L3 26 Z" fill="none" stroke="#a6f6ff" stroke-width="3"/><path d="M9 20 C11 14 13 10 13 7 C13 11 16 16 19 19 C15 18 11 19 9 20 Z" fill="none" stroke="#a6f6ff" stroke-width="2"/></svg>
<div class="t" style="left:2999.0px;top:529.8px;font-size:28px;color:#a6f6ff;font-weight:bold;transform:scaleX(0.7679);">PDF</div>
<svg style="left:3163px;top:529px" width="22" height="22" viewBox="0 0 22 22"><path d="M8.5 0 L12.5 0 L12.5 7 L18 7 L10.5 16 L3 7 L8.5 7 Z" fill="#a6f6ff"/><rect x="0" y="17.5" width="21" height="4" fill="#a6f6ff"/></svg>
<div class="t" style="left:3202.0px;top:530.3px;font-size:28px;color:#a6f6ff;font-weight:bold;transform:scaleX(0.7823);">Export(SHP)</div>
<div class="a" style="left:0px;top:606px;width:3343px;height:98px;background:#f3f7fa;"></div>
<div class="a" style="left:0px;top:605px;width:3343px;height:2px;background:#eceff2;"></div>
<div class="t" style="left:39.0px;top:622.6px;font-size:30px;color:#404040;transform:scaleX(0.9500);">bbbb</div>
<div class="t" style="left:356.0px;top:622.6px;font-size:30px;color:#404040;transform:scaleX(0.9500);">bbbb</div>
<div class="t" style="left:530.0px;top:621.4px;font-size:29px;color:#575757;transform:scaleX(0.9500);">Sardinia</div>
<div class="t" style="left:790.0px;top:621.4px;font-size:29px;color:#575757;transform:scaleX(0.9650);">Cagliari</div>
<div class="t" style="left:1050.0px;top:621.4px;font-size:29px;color:#575757;transform:scaleX(0.9450);">Cagliari</div>
<div class="t" style="left:1309.0px;top:621.4px;font-size:29px;color:#575757;transform:scaleX(0.9120);">[CAGLIARI ASSL] -</div>
<div class="t" style="left:1309.0px;top:662.4px;font-size:29px;color:#575757;transform:scaleX(0.9120);">CAGLIARI ASSL</div>
<div class="t" style="left:1569.0px;top:621.4px;font-size:29px;color:#575757;transform:scaleX(0.9840);">2023-08-02</div>
<div class="t" style="left:1828.0px;top:621.4px;font-size:29px;color:#575757;transform:scaleX(0.9040);">10:10:56</div>
<div class="t" style="left:2088.0px;top:621.4px;font-size:29px;color:#575757;transform:scaleX(0.9480);">1.30.07pm</div>
<div class="t" style="left:2327.0px;top:621.4px;font-size:29px;color:#575757;transform:scaleX(0.9300);">00:03:58</div>
<div class="t" style="left:2492.0px;top:621.4px;font-size:29px;color:#575757;transform:scaleX(0.9250);">38.39</div>
<div class="a" style="left:2651px;top:614px;width:226px;height:61px;background:#0299b6;border-radius:5px;border:2px solid #0a88a2;box-shadow:0 0 0 2px #22e2f4;"></div>
<div class="a" style="left:2891px;top:614px;width:225px;height:55px;background:#0299b6;border-radius:5px;border:2px solid #0a88a2;box-shadow:0 0 0 2px #22e2f4;"></div>
<div class="a" style="left:3134px;top:614px;width:225px;height:55px;background:#0299b6;border-radius:5px;border:2px solid #0a88a2;box-shadow:0 0 0 2px #22e2f4;"></div>
<svg style="left:2720px;top:632px" width="24" height="24" viewBox="0 0 24 24"><circle cx="12" cy="12" r="11" fill="#a6f6ff"/><rect x="10" y="10" width="4" height="9" fill="#0299b6"/><circle cx="12" cy="6.5" r="2.2" fill="#0299b6"/></svg>
<div class="t" style="left:2755.0px;top:635.5px;font-size:26px;color:#a6f6ff;font-weight:bold;transform:scaleX(0.8737);">WEB</div>
<svg style="left:2962px;top:631px" width="26" height="28" viewBox="0 0 26 28"><path d="M3 2 L16 2 L23 9 L23 26 L3 26 Z" fill="none" stroke="#a6f6ff" stroke-width="3"/><path d="M9 20 C11 14 13 10 13 7 C13 11 16 16 19 19 C15 18 11 19 9 20 Z" fill="none" stroke="#a6f6ff" stroke-width="2"/></svg>
<div class="t" style="left:2999.0px;top:629.8px;font-size:28px;color:#a6f6ff;font-weight:bold;transform:scaleX(0.7679);">PDF</div>
<svg style="left:3163px;top:629px" width="22" height="22" viewBox="0 0 22 22"><path d="M8.5 0 L12.5 0 L12.5 7 L18 7 L10.5 16 L3 7 L8.5 7 Z" fill="#a6f6ff"/><rect x="0" y="17.5" width="21" height="4" fill="#a6f6ff"/></svg>
<div class="t" style="left:3202.0px;top:630.3px;font-size:28px;color:#a6f6ff;font-weight:bold;transform:scaleX(0.7823);">Export(SHP)</div>
<div class="a" style="left:0px;top:703px;width:3343px;height:2px;background:#eceff2;"></div>
<div class="t" style="left:39.0px;top:719.6px;font-size:30px;color:#404040;transform:scaleX(0.9500);">zzzz</div>
<div class="t" style="left:364.0px;top:719.6px;font-size:30px;color:#404040;transform:scaleX(0.9500);">zzzz</div>
<div class="t" style="left:530.0px;top:723.4px;font-size:29px;color:#575757;transform:scaleX(0.9500);">Sardinia</div>
<div class="t" style="left:790.0px;top:723.4px;font-size:29px;color:#575757;transform:scaleX(0.9650);">Cagliari</div>
<div class="t" style="left:1050.0px;top:723.4px;font-size:29px;color:#575757;transform:scaleX(0.9450);">Sextu</div>
<div class="t" style="left:1309.0px;top:723.4px;font-size:29px;color:#575757;transform:scaleX(0.9120);">[ORISTANO ASSL]</div>
<div class="a" style="left:0;top:0;width:3343px;height:772px;overflow:hidden;">
<div class="t" style="left:1309.0px;top:764.4px;font-size:29px;color:#575757;transform:scaleX(0.9120);">- ORISTANO ASSL</div>
</div>
<div class="t" style="left:1569.0px;top:723.4px;font-size:29px;color:#575757;transform:scaleX(0.9840);">2023-08-01</div>
<div class="t" style="left:1828.0px;top:723.4px;font-size:29px;color:#575757;transform:scaleX(0.9040);">09:30:27</div>
<div class="t" style="left:2088.0px;top:723.4px;font-size:29px;color:#575757;transform:scaleX(0.9480);">17:36:29</div>
<div class="t" style="left:2327.0px;top:723.4px;font-size:29px;color:#575757;transform:scaleX(0.9300);">00:52:58</div>
<div class="t" style="left:2492.0px;top:723.4px;font-size:29px;color:#575757;transform:scaleX(0.9250);">1799.61</div>
<div class="a" style="left:2651px;top:715px;width:226px;height:61px;background:#0299b6;border-radius:5px;border:2px solid #0a88a2;box-shadow:0 0 0 2px #22e2f4;"></div>
<div class="a" style="left:2891px;top:715px;width:225px;height:55px;background:#0299b6;border-radius:5px;border:2px solid #0a88a2;box-shadow:0 0 0 2px #22e2f4;"></div>
<div class="a" style="left:3134px;top:715px;width:225px;height:55px;background:#0299b6;border-radius:5px;border:2px solid #0a88a2;box-shadow:0 0 0 2px #22e2f4;"></div>
<svg style="left:2720px;top:733px" width="24" height="24" viewBox="0 0 24 24"><circle cx="12" cy="12" r="11" fill="#a6f6ff"/><rect x="10" y="10" width="4" height="9" fill="#0299b6"/><circle cx="12" cy="6.5" r="2.2" fill="#0299b6"/></svg>
<div class="t" style="left:2755.0px;top:736.5px;font-size:26px;color:#a6f6ff;font-weight:bold;transform:scaleX(0.8737);">WEB</div>
<svg style="left:2962px;top:732px" width="26" height="28" viewBox="0 0 26 28"><path d="M3 2 L16 2 L23 9 L23 26 L3 26 Z" fill="none" stroke="#a6f6ff" stroke-width="3"/><path d="M9 20 C11 14 13 10 13 7 C13 11 16 16 19 19 C15 18 11 19 9 20 Z" fill="none" stroke="#a6f6ff" stroke-width="2"/></svg>
<div class="t" style="left:2999.0px;top:730.8px;font-size:28px;color:#a6f6ff;font-weight:bold;transform:scaleX(0.7679);">PDF</div>
<svg style="left:3163px;top:730px" width="22" height="22" viewBox="0 0 22 22"><path d="M8.5 0 L12.5 0 L12.5 7 L18 7 L10.5 16 L3 7 L8.5 7 Z" fill="#a6f6ff"/><rect x="0" y="17.5" width="21" height="4" fill="#a6f6ff"/></svg>
<div class="t" style="left:3202.0px;top:731.3px;font-size:28px;color:#a6f6ff;font-weight:bold;transform:scaleX(0.7823);">Export(SHP)</div>
</div>
<svg style="left:583px;top:1313px" width="14" height="16" viewBox="0 0 14 16"><path d="M10 3 L4 8 L10 13 Z" fill="#777"/></svg>
<div class="a" style="left:605px;top:1310px;width:1562px;height:24px;background:#c1c1c1;"></div>
<div class="a" style="left:3916px;top:779px;width:25px;height:503px;background:#c1c1c1;"></div>
<svg style="left:3920px;top:548px" width="16" height="14" viewBox="0 0 16 14"><path d="M3 10 L8 4 L13 10 Z" fill="#555"/></svg>
<svg style="left:3920px;top:1288px" width="16" height="14" viewBox="0 0 16 14"><path d="M3 4 L8 10 L13 4 Z" fill="#777"/></svg>
<div class="a" style="left:3912px;top:1313px;width:29px;height:31px;background:#dedede;"></div>
<div class="t " style="left:576.0px;top:1367.4px;font-size:29px;color:#555;transform:scaleX(0.9761);">Views 21 to 30 of 79 items</div>
<div class="t " style="left:3205.0px;top:1432.6px;font-size:28px;color:#74a8b4;transform:scaleX(0.9639);">Previous</div>
<div class="t " style="left:3359.0px;top:1432.6px;font-size:28px;color:#74a8b4;transform:scaleX(0.7064);">1</div>
<div class="t " style="left:3416.0px;top:1432.6px;font-size:28px;color:#74a8b4;transform:scaleX(0.8990);">2</div>
<div class="t " style="left:3537.0px;top:1432.6px;font-size:28px;color:#74a8b4;transform:scaleX(0.9633);">4</div>
<div class="t " style="left:3598.0px;top:1432.6px;font-size:28px;color:#74a8b4;transform:scaleX(0.8990);">5</div>
<div class="t " style="left:3724.0px;top:1432.6px;font-size:28px;color:#74a8b4;transform:scaleX(0.8990);">8</div>
<div class="t " style="left:3656.0px;top:1439.5px;font-size:22px;color:#a8c4c8;transform:scaleX(1.1998);">...</div>
<div class="t " style="left:3784.0px;top:1432.6px;font-size:28px;color:#74a8b4;transform:scaleX(1.0230);">Following</div>
<div class="a" style="left:3454px;top:1410px;width:61px;height:69px;background:#0168ee;box-shadow:0 0 0 2px #30d8ff;"></div>
<div class="t " style="left:3477.0px;top:1432.7px;font-size:27px;color:#30e0ff;font-weight:bold;transform:scaleX(0.9323);">3</div>
</div></body></html>
